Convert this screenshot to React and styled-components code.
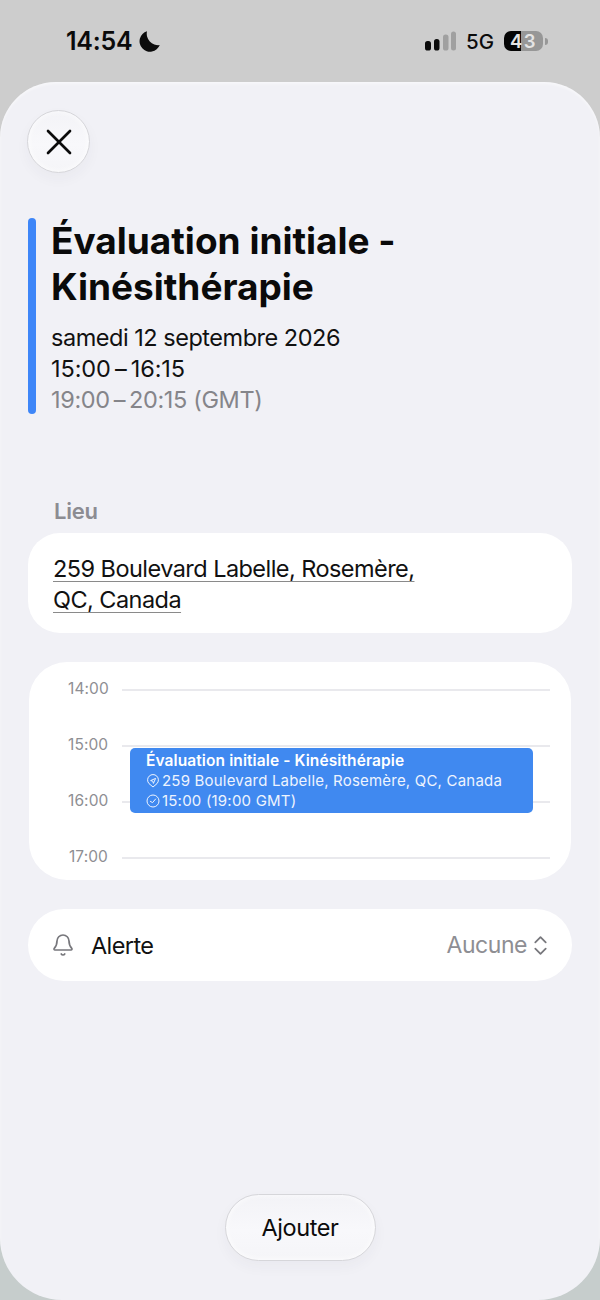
import React from "react";
import styled, { createGlobalStyle } from "styled-components";
import { Bell, ChevronsUpDown, X } from "lucide-react";

const GlobalStyle = createGlobalStyle`
  html, body {
    margin: 0;
    padding: 0;
    background: #c9cfce;
  }
  * {
    box-sizing: border-box;
  }
  body {
    font-family: Inter, "Liberation Sans", sans-serif;
    -webkit-font-smoothing: antialiased;
  }
`;

const HOURS = ["14:00", "15:00", "16:00", "17:00"];

const Page = styled.div`
  width: 600px;
  height: 1300px;
  display: flex;
  flex-direction: column;
  overflow: hidden;
  background: linear-gradient(#cdcdcd 0, #cdcdcd 1100px, #c6cdcc 1200px);
`;

const StatusBar = styled.header`
  flex: 0 0 82px;
  display: flex;
  align-items: center;
  justify-content: space-between;
  padding: 0 52px 0 66px;
`;

const StatusLeft = styled.div`
  display: flex;
  align-items: center;
  gap: 5px;
`;

const StatusRight = styled.div`
  display: flex;
  align-items: center;
`;

const Clock = styled.span`
  font-size: 25px;
  font-weight: 600;
  letter-spacing: -0.2px;
  color: #0b0b0b;
`;

const Network = styled.span`
  font-size: 20.5px;
  font-weight: 500;
  margin: 0 10px;
  color: #0b0b0b;
`;

const Battery = styled.div`
  width: 39px;
  height: 20px;
  border-radius: 7px;
  overflow: hidden;
  display: flex;
  align-items: center;
  justify-content: center;
  background: linear-gradient(90deg, #050505 0, #050505 44%, #979797 44%);
  color: #e4e4e4;
  font-size: 18.5px;
  font-weight: 600;
  letter-spacing: 1.5px;
`;

const BatteryCap = styled.span`
  width: 3px;
  height: 7px;
  margin-left: 2px;
  border-radius: 0 3px 3px 0;
  background: #979797;
`;

const Sheet = styled.main`
  flex: 1;
  display: flex;
  flex-direction: column;
  padding: 28px 28px 39px;
  border-radius: 56px 56px 62px 62px;
  background: #f1f1f6;
  box-shadow: inset 0 2px 3px rgba(255, 255, 255, 0.5);
`;

const GlassButton = styled.button`
  display: flex;
  align-items: center;
  justify-content: center;
  padding: 0;
  border: 1px solid #d6d6da;
  background: linear-gradient(#f3f3f7, #f8f8fb 55%, #f5f5f8);
  box-shadow: 0 6px 14px rgba(60, 60, 80, 0.04), inset 0 0 6px rgba(255, 255, 255, 0.9);
  color: #0b0b0b;
  font-family: inherit;
`;

const CloseButton = styled(GlassButton)`
  width: 63px;
  height: 63px;
  margin-left: -1px;
  border-radius: 50%;
`;

const Header = styled.section`
  display: flex;
  gap: 15px;
  margin-top: 45px;
`;

const AccentBar = styled.div`
  flex: 0 0 8px;
  margin-bottom: 1px;
  border-radius: 4px;
  background: #3e86f8;
`;

const HeaderText = styled.div`
  display: flex;
  flex-direction: column;
`;

const Title = styled.h1`
  margin: 0 0 12px;
  font-size: 37px;
  line-height: 46px;
  font-weight: 700;
  letter-spacing: 0;
  color: #0a0a0a;
`;

const Line = styled.div`
  font-size: 23.5px;
  line-height: 31px;
  letter-spacing: ${({ $spacing }) => $spacing || "-0.48px"};
  color: ${({ $muted }) => ($muted ? "#85858a" : "#111")};
`;

const SectionLabel = styled.div`
  margin: 82px 0 8px 26px;
  font-size: 22px;
  line-height: 28px;
  font-weight: 600;
  letter-spacing: -0.2px;
  color: #8c8c92;
`;

const AddressCard = styled.div`
  height: 100px;
  padding: 20px 25px;
  border-radius: 32px;
  background: #fff;
  font-size: 23.5px;
  line-height: 31px;
  letter-spacing: -0.55px;
  color: #111;
`;

const AddressLink = styled.span`
  text-decoration: underline;
  text-decoration-thickness: 1px;
  text-underline-offset: 4px;
  text-decoration-color: #8a8a8a;
`;

const CalendarCard = styled.section`
  position: relative;
  margin: 29px 1px 0;
  height: 218px;
  padding: 0 21px 0 39px;
  border-radius: 38px;
  background: #fff;
  overflow: hidden;
`;

const HourRow = styled.div`
  display: grid;
  grid-template-columns: 40px 1fr;
  column-gap: 14px;
  align-items: center;
  height: 56px;
`;

const HourLabel = styled.span`
  margin-bottom: 4px;
  font-size: 15.5px;
  letter-spacing: 0.1px;
  text-align: right;
  color: #8e8e93;
`;

const HourLine = styled.span`
  height: 1.5px;
  background: #e9e9ed;
`;

const EventBlock = styled.div`
  position: absolute;
  left: 101px;
  right: 38px;
  top: 86px;
  height: 65px;
  padding: 3px 16px 0;
  border-radius: 5px;
  background: #4089f0;
  color: #fff;
`;

const EventTitle = styled.div`
  font-size: 15.5px;
  line-height: 20px;
  font-weight: 600;
  letter-spacing: 0.1px;
`;

const EventLine = styled.div`
  display: flex;
  align-items: center;
  gap: 2px;
  font-size: 15px;
  line-height: 20px;
  letter-spacing: 0.2px;
  color: #eef4fe;
`;

const AlertCard = styled.section`
  display: flex;
  align-items: center;
  height: 72px;
  margin-top: 29px;
  padding: 0 19px 0 23px;
  border-radius: 36px;
  background: #fff;
`;

const AlertLabel = styled.span`
  margin-left: 16px;
  font-size: 23.5px;
  letter-spacing: -0.6px;
  color: #111;
`;

const AlertValue = styled.span`
  margin-left: auto;
  margin-right: 1px;
  font-size: 23px;
  letter-spacing: -0.45px;
  color: #8e8e93;
`;

const AddButton = styled(GlassButton)`
  width: 151px;
  height: 67px;
  margin: auto auto 0;
  border-radius: 34px;
  font-size: 23.5px;
  letter-spacing: -0.4px;
`;

const Moon = () => (
  <svg width="23" height="23" viewBox="0 0 22 22">
    <path
      d="M8.6 1.2A10 10 0 1 0 20.8 14.4 11 11 0 0 1 8.6 1.2Z"
      fill="#0b0b0b"
    />
  </svg>
);

const Signal = () => (
  <svg width="31" height="20" viewBox="0 0 31 20">
    <rect x="0" y="10" width="6" height="9.5" rx="2.6" fill="#0b0b0b" />
    <rect x="9" y="8" width="5.5" height="11.5" rx="2.6" fill="#0b0b0b" />
    <rect x="18" y="3.5" width="5.5" height="16" rx="2.6" fill="#a0a0a0" />
    <rect x="26" y="0.5" width="5" height="19" rx="2.5" fill="#a0a0a0" />
  </svg>
);

const PinIcon = () => (
  <svg width="14" height="14" viewBox="0 0 14 14" fill="none" stroke="#eef4fe" strokeWidth="1">
    <path d="M7 13 3 9.6A5.4 5.4 0 1 1 11 9.6Z" strokeLinejoin="round" />
    <path d="M9.6 4.4 4.6 6.6 6.8 7.2 7.4 9.4Z" strokeLinejoin="round" />
  </svg>
);

const ClockIcon = () => (
  <svg width="14" height="14" viewBox="0 0 14 14" fill="none" stroke="#eef4fe" strokeWidth="1">
    <circle cx="7" cy="7" r="6" />
    <path d="M4.4 7.4 6.6 8.6 9.6 5" strokeLinecap="round" strokeLinejoin="round" />
  </svg>
);

export default function App() {
  return (
    <>
      <GlobalStyle />
      <Page>
        <StatusBar>
          <StatusLeft>
            <Clock>14:54</Clock>
            <Moon />
          </StatusLeft>
          <StatusRight>
            <Signal />
            <Network>5G</Network>
            <Battery>43</Battery>
            <BatteryCap />
          </StatusRight>
        </StatusBar>
        <Sheet>
          <CloseButton aria-label="Fermer">
            <X size={44} strokeWidth={1.45} />
          </CloseButton>

          <Header>
            <AccentBar />
            <HeaderText>
              <Title>
                Évaluation initiale -<br />
                Kinésithérapie
              </Title>
              <Line>samedi 12 septembre 2026</Line>
              <Line $spacing="-0.1px">15:00{"\u2009"}–{"\u2009"}16:15</Line>
              <Line $muted $spacing="-0.36px">19:00{"\u2009"}–{"\u2009"}20:15 (GMT)</Line>
            </HeaderText>
          </Header>

          <SectionLabel>Lieu</SectionLabel>
          <AddressCard>
            <AddressLink>
              259 Boulevard Labelle, Rosemère,
              <br />
              QC, Canada
            </AddressLink>
          </AddressCard>

          <CalendarCard>
            {HOURS.map((hour) => (
              <HourRow key={hour}>
                <HourLabel>{hour}</HourLabel>
                <HourLine />
              </HourRow>
            ))}
            <EventBlock>
              <EventTitle>Évaluation initiale - Kinésithérapie</EventTitle>
              <EventLine>
                <PinIcon />
                259 Boulevard Labelle, Rosemère, QC, Canada
              </EventLine>
              <EventLine>
                <ClockIcon />
                15:00 (19:00 GMT)
              </EventLine>
            </EventBlock>
          </CalendarCard>

          <AlertCard>
            <Bell size={24} strokeWidth={1.7} color="#77777c" />
            <AlertLabel>Alerte</AlertLabel>
            <AlertValue>Aucune</AlertValue>
            <ChevronsUpDown size={25} strokeWidth={1.7} color="#77777c" />
          </AlertCard>

          <AddButton>Ajouter</AddButton>
        </Sheet>
      </Page>
    </>
  );
}
